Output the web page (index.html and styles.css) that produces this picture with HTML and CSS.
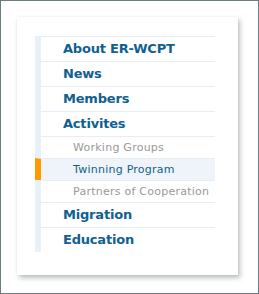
FILE: index.html
```html
<!DOCTYPE html>
<html lang="en">
<head>
  <meta charset="UTF-8" />
  <title>ER-WCPT menu</title>
  <link rel="stylesheet" href="styles.css">
</head>
<body>
  <div class="frame">
    <div class="box">
      <ul class="menu">
        <li><a href="#">About ER-WCPT</a></li>
        <li><a href="#">News</a></li>
        <li><a href="#">Members</a></li>
        <li><a href="#">Activites</a></li>
        <li class="sub"><a href="#">Working Groups</a></li>
        <li class="sub active"><a href="#">Twinning Program</a></li>
        <li class="sub"><a href="#">Partners of Cooperation</a></li>
        <li><a href="#">Migration</a></li>
        <li class="last"><a href="#">Education</a></li>
      </ul>
    </div>
  </div>
</body>
</html>
```

FILE: styles.css
```css
html, body {
  margin: 0;
  padding: 0;
}
body {
  font-family: "DejaVu Sans", Verdana, sans-serif;
  background: #fff;
}
.frame {
  width: 259px;
  height: 294px;
  box-sizing: border-box;
  border: 1px solid #6b7b82;
  padding: 16px 20px 0 16px;
}
.box {
  width: 221px;
  height: 258px;
  box-sizing: border-box;
  background: #fff;
  box-shadow: 2px 3px 5px rgba(60, 75, 80, 0.35), 0 0 2px rgba(0, 0, 0, 0.06);
  padding: 19px 23px 0 18px;
}
.menu {
  list-style: none;
  margin: 0;
  padding: 0;
  border-left: 6px solid #e8f0f8;
}
.menu li {
  border-top: 1px solid #e6edf3;
}
.menu li a {
  display: block;
  height: 24px;
  line-height: 24px;
  padding-left: 22px;
  font-size: 13px;
  font-weight: bold;
  letter-spacing: -0.2px;
  color: #11608f;
  text-decoration: none;
  white-space: nowrap;
}
.menu li.sub a {
  height: 21px;
  line-height: 21px;
  padding-left: 32px;
  font-size: 11px;
  font-weight: normal;
  letter-spacing: 0.25px;
  color: #999;
}
.menu li.active {
  margin-left: -6px;
  border-left: 6px solid #f90;
}
.menu li.active a {
  background: #eef4f9;
  color: #11608f;
}
```
